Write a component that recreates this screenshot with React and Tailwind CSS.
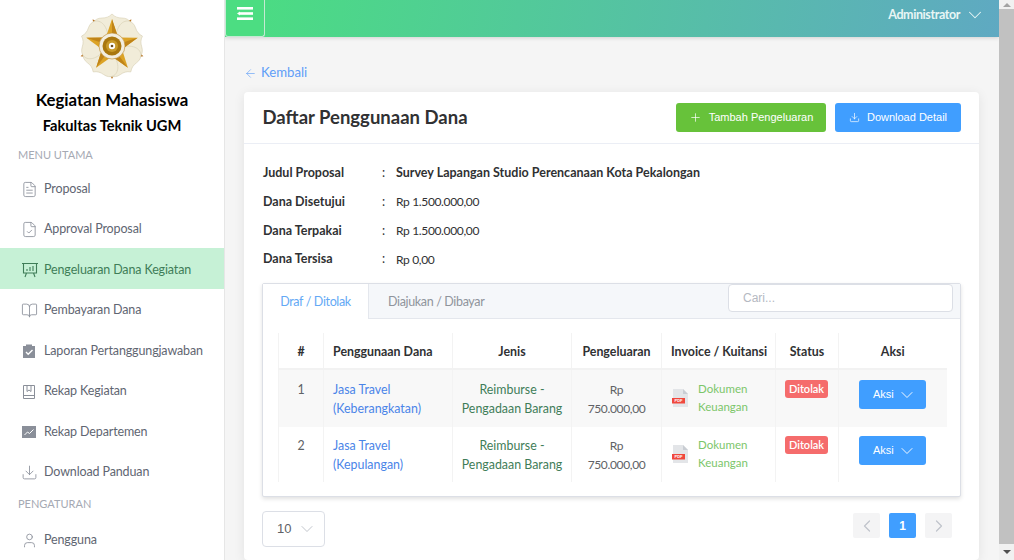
import React from "react";
import {
  ArrowLeft,
  BookOpen,
  ChevronDown,
  ChevronLeft,
  ChevronRight,
  Download,
  FileCheck,
  FileText,
  Plus,
  User,
} from "lucide-react";

const sans = "font-['Lato','Noto_Sans',sans-serif]";
const helv = "font-['Liberation_Sans',Arial,sans-serif]";

const ClipboardIcon = () => (
  <svg viewBox="0 0 16 16" className="h-4 w-4">
    <path d="M2 3h3V1.5h6V3h3v12H2z" fill="#8a8f99" />
    <path d="M5 9l2.2 2.2L11.5 7" fill="none" stroke="#fff" strokeWidth="1.4" />
  </svg>
);

const BookmarkIcon = () => (
  <svg viewBox="0 0 16 16" className="h-4 w-4" fill="none" stroke="#8a8f99">
    <path d="M2.5 1.5h11v13h-11zM2.5 11.5h11" />
    <path d="M6 1.5v6l2-1.5 2 1.5v-6" />
  </svg>
);

const ChartIcon = () => (
  <svg viewBox="0 0 16 16" className="h-4 w-4">
    <rect x="1" y="2" width="14" height="12" fill="#8a8f99" />
    <path d="M3.5 11l3-3 2 1.5 4-4" fill="none" stroke="#fff" />
  </svg>
);

const BoardIcon = () => (
  <svg viewBox="0 0 18 16" className="h-4 w-[18px]" fill="none" stroke="#3f7d58" strokeWidth="1.1">
    <path d="M1 1.5h16M2.5 1.5v9.5h13V1.5M5.5 11l-1.5 4M12.5 11l1.5 4" />
    <path d="M6 9V7M9 9V5M12 9V4" />
  </svg>
);

const menuUtama = [
  { label: "Proposal", icon: <FileText size={17} strokeWidth={1.2} /> },
  { label: "Approval Proposal", icon: <FileCheck size={17} strokeWidth={1.2} /> },
  { label: "Pengeluaran Dana Kegiatan", icon: <BoardIcon />, active: true },
  { label: "Pembayaran Dana", icon: <BookOpen size={17} strokeWidth={1.2} /> },
  { label: "Laporan Pertanggungjawaban", icon: <ClipboardIcon /> },
  { label: "Rekap Kegiatan", icon: <BookmarkIcon /> },
  { label: "Rekap Departemen", icon: <ChartIcon /> },
  { label: "Download Panduan", icon: <Download size={17} strokeWidth={1.2} /> },
];

const rows = [
  { no: 1, name: "Jasa Travel (Keberangkatan)" },
  { no: 2, name: "Jasa Travel (Kepulangan)" },
];

const info = [
  { label: "Judul Proposal", value: "Survey Lapangan Studio Perencanaan Kota Pekalongan", bold: true },
  { label: "Dana Disetujui", value: "Rp 1.500.000,00" },
  { label: "Dana Terpakai", value: "Rp 1.500.000,00" },
  { label: "Dana Tersisa", value: "Rp 0,00" },
];

const Logo = () => (
  <svg viewBox="-33 -33 66 66" className="h-[66px] w-[66px]">
    {[36, 108, 180, 252, 324].map((a) => (
      <path key={a} d="M0 -33L3 -27L0 -22L-3 -27Z" fill="#b8721e" transform={`rotate(${a})`} />
    ))}
    {[0, 72, 144, 216, 288].map((a) => (
      <path
        key={a}
        d="M0 -4C-25 -10 -23 -28 -10 -28C-6 -28 -3 -29 0 -32C3 -29 6 -28 10 -28C23 -28 25 -10 0 -4Z"
        fill="#f1ecd9"
        stroke="#d8d0b4"
        strokeWidth="0.6"
        transform={`rotate(${a})`}
      />
    ))}
    {[0, 72, 144, 216, 288].map((a) => (
      <g key={a} transform={`rotate(${a})`}>
        <path d="M0 -27L6 -9L-6 -9Z" fill="#dca326" />
        <path d="M0 -27L6 -9L0 -9Z" fill="#c08418" />
      </g>
    ))}
    <circle r="13" fill="#f3eee0" stroke="#b9862c" strokeWidth="0.6" />
    <circle r="9.5" fill="#a9770f" />
    <circle r="6" fill="#c99a2a" />
    <circle r="3.2" fill="#fff" />
    <circle r="1.3" fill="#6b4a1e" />
  </svg>
);

const PdfIcon = () => (
  <svg viewBox="0 0 16 18" className="h-[18px] w-4 shrink-0">
    <path d="M1 0h10l5 5v13H1z" fill="#e3e5e8" />
    <path d="M11 0l5 5h-5z" fill="#c9cdd3" />
    <rect x="0" y="9" width="13" height="5.5" fill="#f0483e" />
    <text x="6.5" y="13.2" textAnchor="middle" fontSize="4" fill="#fff" fontFamily="Liberation Sans" fontWeight="700">PDF</text>
  </svg>
);

const MenuItem = ({ label, icon, active }) => (
  <div className={`flex h-[40.5px] items-center pt-[3px] pl-[21px] text-[12.5px] tracking-[-0.13px] ${active ? "bg-[#c6f1d6] text-[#3f7d58]" : "text-[#5f6672]"}`}>
    <span className={`flex w-[23px] shrink-0 ${active ? "text-[#3f7d58]" : "text-[#8a8f99]"}`}>{icon}</span>
    {label}
  </div>
);

const Sidebar = () => (
  <aside className="flex h-full w-[225px] shrink-0 flex-col overflow-hidden border-r border-[#e6e6e6] bg-white">
    <div className="flex flex-col items-center pt-[13px]">
      <Logo />
      <div className="mt-[9px] text-[16.8px] leading-[24px] font-bold text-black">Kegiatan Mahasiswa</div>
      <div className="mt-[1px] text-[14.7px] leading-[24px] font-bold text-black">Fakultas Teknik UGM</div>
    </div>
    <div className="mt-[9px] h-[18px] pl-[18px] text-[11px] leading-[18px] text-[#a5a9b3]">MENU UTAMA</div>
    <div className="mt-[3.3px]">
      {menuUtama.map((m) => (
        <MenuItem key={m.label} {...m} />
      ))}
    </div>
    <div className="mt-[3.7px] h-[18px] pl-[18px] text-[11px] leading-[18px] text-[#a5a9b3]">PENGATURAN</div>
    <div className="mt-[5.5px]">
      <MenuItem label="Pengguna" icon={<User size={17} strokeWidth={1.2} />} />
    </div>
  </aside>
);

const Topbar = () => (
  <header className="flex h-[37px] shrink-0 items-start justify-between bg-[linear-gradient(100deg,#4ade80,#5fa9c2)] shadow-[0_1px_4px_rgba(0,0,0,0.15)]">
    <button className="flex h-[37px] w-[40px] items-start justify-center rounded-b-[3px] border-x border-b border-[#c5e9d3] bg-[#4cdd82] pt-[7px] text-white">
      <svg viewBox="0 0 16 13" className="h-[13px] w-4" fill="#fff">
        <rect width="16" height="2.6" />
        <rect x="2.5" y="5.2" width="13.5" height="2.6" />
        <rect y="10.4" width="16" height="2.6" />
        <path d="M0 6.5L3 4.5v4z" />
      </svg>
    </button>
    <div className={`flex h-[30px] items-center gap-[3.5px] pr-[13.5px] text-[12.5px] font-bold tracking-[-0.4px] text-[#e8f6f5] ${sans}`}>
      Administrator
      <ChevronDown size={22} strokeWidth={1.1} />
    </div>
  </header>
);

const InfoBlock = () => (
  <div className="px-[19px] pt-[15px] pb-[9px] text-[12.5px] text-[#303133]">
    {info.map((i) => (
      <div key={i.label} className="flex h-[28.8px] items-center">
        <span className="w-[119px] font-bold">{i.label}</span>
        <span className="w-[14px]">:</span>
        <span className={i.bold ? "font-bold" : "text-[12px] tracking-[-0.35px]"}>{i.value}</span>
      </div>
    ))}
  </div>
);

const ActionButton = ({ className, icon, children }) => (
  <button className={`flex h-[29px] items-center justify-center gap-[7px] rounded-[3px] text-[11px] text-white ${helv} ${className}`}>
    {icon}
    {children}
  </button>
);

const headers = ["#", "Penggunaan Dana", "Jenis", "Pengeluaran", "Invoice / Kuitansi", "Status", "Aksi"];

const Table = () => (
  <table className="ml-[15px] w-[668px] table-fixed border-collapse text-[12.4px] leading-[19px]">
    <colgroup>
      <col className="w-[45px]" />
      <col className="w-[129px]" />
      <col className="w-[119px]" />
      <col className="w-[90px]" />
      <col className="w-[114px]" />
      <col className="w-[63px]" />
      <col className="w-[108px]" />
    </colgroup>
    <thead>
      <tr className="h-[36px] border-b-2 border-[#f2f2f2]">
        {headers.map((h, i) => (
          <th key={h} className={`border-l border-[#f3f3f3] px-[9px] pt-[1px] pb-0 font-bold whitespace-nowrap text-[#303133] ${i === 1 ? "text-left" : "text-center"}`}>
            {h}
          </th>
        ))}
      </tr>
    </thead>
    <tbody>
      {rows.map((r) => {
        const textPad = r.no === 1 ? "pt-[9.5px]" : "pt-[8.5px]";
        const boxPad = r.no === 1 ? "pt-[10px]" : "pt-[9px]";
        return (
          <tr key={r.no} className={r.no === 1 ? "h-[58px] bg-[#f8f8f8]" : "h-[55px]"}>
            <td className={`border-l border-[#f3f3f3] text-center align-top text-[#606266] ${textPad}`}>{r.no}</td>
            <td className={`border-l border-[#f3f3f3] px-[9px] align-top text-[#4a84e8] ${textPad}`}>{r.name}</td>
            <td className={`border-l border-[#f3f3f3] px-[4px] text-center align-top text-[#3f7d58] ${textPad}`}>
              Reimburse -<br />Pengadaan Barang
            </td>
            <td className={`border-l border-[#f3f3f3] px-[9px] text-center align-top text-[12px] tracking-[-0.35px] text-[#606266] ${textPad}`}>Rp 750.000,00</td>
            <td className={`border-l border-[#f3f3f3] pl-[10px] align-top ${textPad}`}>
              <div className="flex items-center gap-[10px] text-[#7cc66a]">
                <PdfIcon />
                <span className="text-[11.5px] leading-[18px]">Dokumen Keuangan</span>
              </div>
            </td>
            <td className={`border-l border-[#f3f3f3] pl-[9px] align-top ${boxPad}`}>
              <span className="block h-[18px] w-[43px] rounded-[3px] bg-[#f56c6c] text-center text-[11px] leading-[18px] font-semibold text-white">Ditolak</span>
            </td>
            <td className={`border-l border-[#f3f3f3] pl-[20px] align-top ${boxPad}`}>
              <button className={`flex h-[29px] w-[67px] items-center gap-[3px] rounded-[3px] bg-[#409eff] pl-[14px] text-[11px] text-white ${helv}`}>
                Aksi
                <ChevronDown size={20} strokeWidth={1.1} />
              </button>
            </td>
          </tr>
        );
      })}
    </tbody>
  </table>
);

const Tabs = () => (
  <div className="mx-[18px] h-[214px] rounded-[2px] border border-[#dcdfe6] bg-white shadow-[0_2px_4px_rgba(0,0,0,0.12)]">
    <div className="flex h-[35px] items-start justify-between border-b border-[#e4e7ed] bg-[#f5f7fa] pr-[7px]">
      <div className="flex text-[12.5px] tracking-[-0.35px]">
        <div className="flex h-[35px] w-[106px] items-center justify-center border-r border-[#e4e7ed] bg-white pt-[2px] text-[#63a9f5]">Draf / Ditolak</div>
        <div className="flex h-[34px] items-center pt-[2px] pl-[19px] text-[#8f949c]">Diajukan / Dibayar</div>
      </div>
      <input
        placeholder="Cari..."
        readOnly
        className={`h-[28px] w-[225px] rounded-[4px] border border-[#dcdfe6] bg-white px-[14px] text-[12px] outline-none placeholder:text-[#b5b9c2] ${helv}`}
      />
    </div>
    <div className="pt-[14px]">
      <Table />
    </div>
  </div>
);

const Pager = () => (
  <div className="flex items-start justify-between px-[18px] pt-[14px] pb-[13px]">
    <div className={`flex h-[36px] w-[63px] items-center justify-between rounded-[4px] border border-[#dcdfe6] pr-[7px] pl-[14px] text-[13px] text-[#606266] ${helv}`}>
      10
      <ChevronDown size={20} strokeWidth={1} className="text-[#b5b9c2]" />
    </div>
    <div className={`mt-[2px] mr-[9px] flex gap-[9px] text-[12px] font-bold ${helv}`}>
      <span className="flex h-[25px] w-[27px] items-center justify-center rounded-[2px] bg-[#f4f4f5] text-[#c0c4cc]"><ChevronLeft size={20} strokeWidth={1.5} /></span>
      <span className="flex h-[25px] w-[27px] items-center justify-center rounded-[2px] bg-[#409eff] text-white">1</span>
      <span className="flex h-[25px] w-[27px] items-center justify-center rounded-[2px] bg-[#f4f4f5] text-[#c0c4cc]"><ChevronRight size={20} strokeWidth={1.5} /></span>
    </div>
  </div>
);

const Scrollbar = () => (
  <div className="flex h-full w-[15px] shrink-0 flex-col items-center bg-[#f1f1f1]">
    <div className="h-[9px] pt-[3px]">
      <div className="h-0 w-0 border-x-[4px] border-b-[4px] border-x-transparent border-b-[#a3a3a3]" />
    </div>
    <div className="h-[535px] w-full bg-[#c1c1c1]" />
    <div className="pt-[6px]">
      <div className="h-0 w-0 border-x-[4px] border-t-[4px] border-x-transparent border-t-[#505050]" />
    </div>
  </div>
);

export default function App() {
  return (
    <div className={`flex h-[560px] w-[1014px] overflow-hidden bg-[#f5f5f5] ${sans}`}>
      <Sidebar />
      <main className="flex h-full w-[774px] flex-col overflow-hidden">
        <Topbar />
        <div className="pt-[27px] pr-[20px] pl-[19px]">
          <div className="flex h-[18px] items-center gap-[4px] text-[13.2px] text-[#5f9ef8]">
            <ArrowLeft size={13} strokeWidth={1.2} />
            Kembali
          </div>
          <section className="mt-[10px] rounded-[4px] bg-white shadow-[0_2px_12px_rgba(0,0,0,0.08)]">
            <div className="flex h-[52px] items-center justify-between border-b border-[#ebeef5] pr-[18px] pl-[18.5px]">
              <h1 className="text-[18.5px] font-bold text-[#303133]">Daftar Penggunaan Dana</h1>
              <div className="flex gap-[9px]">
                <ActionButton className="w-[150px] bg-[#67c23a]" icon={<Plus size={13} strokeWidth={1.3} />}>Tambah Pengeluaran</ActionButton>
                <ActionButton className="w-[126px] bg-[#409eff]" icon={<Download size={11} strokeWidth={1.5} />}>Download Detail</ActionButton>
              </div>
            </div>
            <InfoBlock />
            <Tabs />
            <Pager />
          </section>
        </div>
      </main>
      <Scrollbar />
    </div>
  );
}
